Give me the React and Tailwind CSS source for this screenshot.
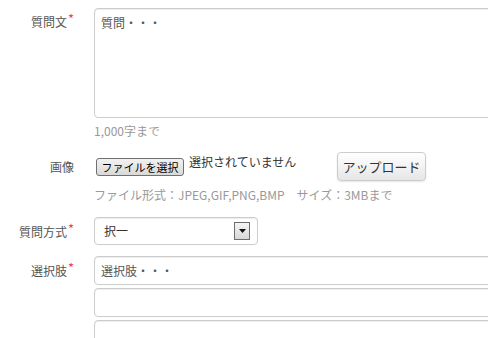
import React from 'react';

const Req = () => <span className="text-[#e5484d] text-[13px] leading-none align-top ml-[1px] relative -top-[1px]">*</span>;

const Label = ({ children, req, pt = 'pt-[6px]' }) => (
  <div className={`w-[74px] shrink-0 text-right leading-[18px] ${pt}`}>
    {children}
    {req && <Req />}
  </div>
);

const boxCls = 'border border-[#cccccc] rounded-[4px] bg-white shadow-[inset_0_1px_1px_rgba(0,0,0,0.075)]';

export default function App() {
  return (
    <div className="w-[488px] h-[338px] overflow-hidden bg-white pt-2 text-xs text-[#555555] font-['Noto_Sans_CJK_JP',sans-serif]">
      {/* 質問文 */}
      <div className="flex">
        <Label req pt="pt-[5px]">質問文</Label>
        <div className="ml-[20px] flex flex-col">
          <div className={`w-[420px] h-[110px] px-[6px] pt-[5px] leading-[18px] ${boxCls}`}>質問・・・</div>
          <div className="mt-[6px] leading-[14px] text-[#999999]">1,000字まで</div>
        </div>
      </div>

      {/* 画像 */}
      <div className="flex mt-[14px]">
        <Label>画像</Label>
        <div className="ml-[20px] flex flex-col">
          <div className="flex items-start h-[29px]">
            <div className="ml-[2px] mt-[6px] w-[88px] h-[18px] flex items-center justify-center border border-[#707070] rounded-[3px] bg-gradient-to-b from-[#f2f2f2] to-[#d9d9d9] text-[11px] text-black leading-none">
              ファイルを選択
            </div>
            <div className="ml-[5px] mt-[3px] w-[148px] leading-[14px] text-[#333333]">選択されていません</div>
            <div className="w-[89px] h-[29px] flex items-center justify-center border border-[#cccccc] rounded-[4px] bg-gradient-to-b from-white to-[#e6e6e6] shadow-[0_1px_2px_rgba(0,0,0,0.1)] text-[13px] text-[#333333]">
              アップロード
            </div>
          </div>
          <div className="mt-[7px] leading-[14px] text-[#999999] whitespace-pre">ファイル形式：JPEG,GIF,PNG,BMP　サイズ：3MBまで</div>
        </div>
      </div>

      {/* 質問方式 */}
      <div className="flex mt-[15px]">
        <Label req>質問方式</Label>
        <div className="ml-[20px]">
          <div className={`w-[164px] h-[28px] flex items-center justify-between pl-[9px] pr-[7px] ${boxCls}`}>
            <span className="text-[#333333]">択一</span>
            <div className="w-[16px] h-[18px] border border-[#6d6d6d] bg-gradient-to-b from-[#f4f4f4] to-[#d8d8d8] flex items-center justify-center">
              <svg width="7" height="4" viewBox="0 0 7 4"><path d="M0 0h7L3.5 4z" fill="#111" /></svg>
            </div>
          </div>
        </div>
      </div>

      {/* 選択肢 */}
      <div className="flex mt-[11px]">
        <Label req>選択肢</Label>
        <div className="ml-[20px] flex flex-col gap-[3px]">
          <div className={`w-[420px] h-[29px] flex items-center px-[6px] ${boxCls}`}>選択肢・・・</div>
          <div className={`w-[420px] h-[29px] ${boxCls}`} />
          <div className={`w-[420px] h-[29px] ${boxCls}`} />
        </div>
      </div>
    </div>
  );
}
